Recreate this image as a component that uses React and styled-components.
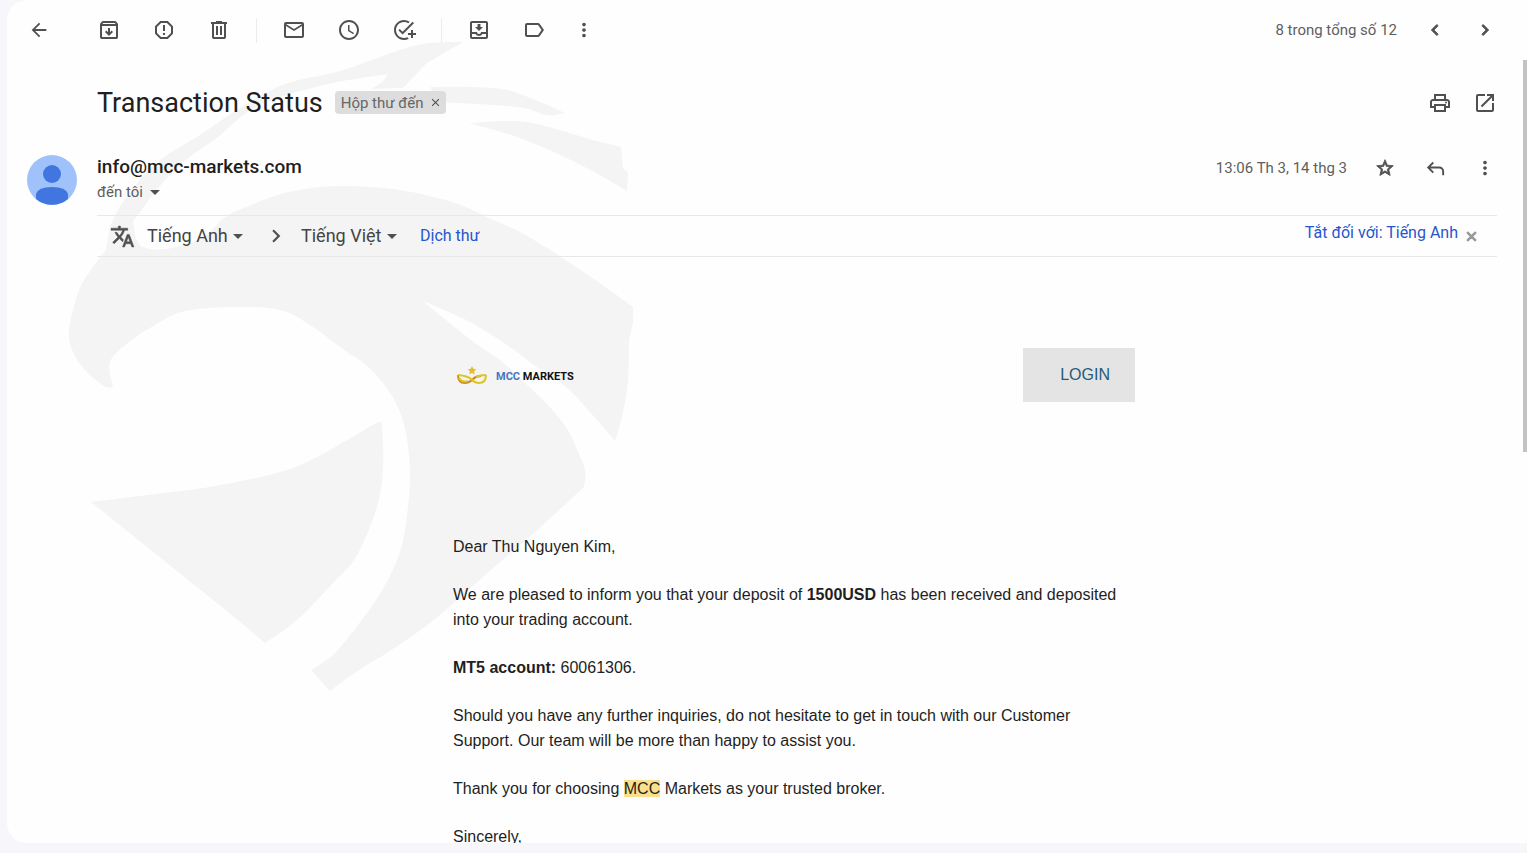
import React from "react";
import styled, { createGlobalStyle } from "styled-components";
import {
  MdReportGmailerrorred,
  MdMailOutline,
  MdAccessTime,
  MdAddTask,
  MdOutlineMoveToInbox,
  MdLabelOutline,
  MdMoreVert,
  MdChevronLeft,
  MdChevronRight,
  MdOutlinePrint,
  MdOpenInNew,
  MdStarOutline,
  MdTranslate,
  MdArrowDropDown,
  MdArrowBack,
  MdClose,
} from "react-icons/md";

const GlobalStyle = createGlobalStyle`
  * { box-sizing: border-box; }
  body {
    margin: 0;
    background: #f6f6fb;
    font-family: Roboto, "Noto Sans", sans-serif;
    color: #1f1f1f;
  }
  button, select { font: inherit; color: inherit; }
`;

const Page = styled.div`
  display: flex;
  height: 100vh;
  padding: 0 0 10px 7px;
`;

const Card = styled.main`
  position: relative;
  isolation: isolate;
  flex: 1;
  min-width: 0;
  display: flex;
  flex-direction: column;
  background: #fefefe;
  border-radius: 20px 0 0 20px;
  overflow: hidden;
`;

const Watermark = styled.svg`
  position: absolute;
  z-index: -1;
  left: 53px;
  top: 30px;
  width: 580px;
  height: 670px;
  fill: #f4f4f4;
`;

const Toolbar = styled.header`
  display: flex;
  align-items: center;
  justify-content: space-between;
  flex: none;
  height: 60px;
  padding: 0 22px 0 12px;
`;

const ToolGroup = styled.div`
  display: flex;
  align-items: center;
  gap: ${(p) => p.$gap || 15}px;
`;

const IconButton = styled.button`
  display: flex;
  align-items: center;
  justify-content: center;
  width: ${(p) => p.$width || 40}px;
  height: 40px;
  margin: 0;
  padding: 0;
  border: 0;
  background: none;
  color: #505050;
  font-size: ${(p) => p.$size || 24}px;
  cursor: pointer;

  path:not([fill="none"]) {
    stroke: ${(p) => (p.$bold ? "currentColor" : "none")};
    stroke-width: 1px;
  }
`;

const BackSlot = styled.div`
  margin-right: 15px;
`;

const Divider = styled.span`
  width: 1px;
  height: 25px;
  margin: 0 2px;
  background: #ececec;
`;

const Meta = styled.span`
  font-size: 15px;
  line-height: 20px;
  color: #5e5e5e;
  margin-right: 8px;
`;

const Scroller = styled.div`
  flex: 1;
  min-height: 0;
  overflow: hidden;
`;

const ScrollTrack = styled.div`
  position: absolute;
  top: 60px;
  right: 0;
  bottom: 0;
  width: 4px;
`;

const ScrollThumb = styled.div`
  height: 50%;
  background: #c3c3c3;
`;

const SubjectRow = styled.div`
  display: flex;
  align-items: center;
  height: 85px;
  padding: 0 22px 0 90px;
`;

const Subject = styled.h1`
  margin: 0;
  font-size: 27px;
  line-height: 36px;
  font-weight: 400;
`;

const Chip = styled.span`
  display: flex;
  align-items: center;
  gap: 6px;
  height: 23px;
  margin: 0 auto 0 12px;
  padding: 0 4px 0 6px;
  border-radius: 4px;
  background: #dddddd;
  color: #666;
  font-size: 15px;
  line-height: 20px;
`;

const PlainButton = styled.button`
  display: flex;
  align-items: center;
  margin: 0;
  padding: 0;
  border: 0;
  background: none;
  color: ${(p) => p.$color || "#505050"};
  font-size: ${(p) => p.$size || 13}px;
  cursor: pointer;

  path:not([fill="none"]) {
    stroke: ${(p) => (p.$bold ? "currentColor" : "none")};
    stroke-width: 2px;
  }
`;

const SenderRow = styled.div`
  display: flex;
  align-items: flex-start;
  height: 70px;
  padding: 3px 22px 0 20px;
`;

const Avatar = styled.svg`
  flex: none;
  width: 50px;
  height: 50px;
  margin: 7px 20px 0 0;
`;

const SenderInfo = styled.div`
  flex: 1;
  padding-top: 7px;
`;

const SenderName = styled.div`
  font-size: 19px;
  line-height: 24px;
  font-weight: 500;
`;

const Recipient = styled.div`
  display: flex;
  align-items: center;
  height: 25px;
  color: #5e5e5e;
  font-size: 15px;
`;

const TranslateBar = styled.div`
  display: flex;
  align-items: center;
  height: 42px;
  margin: 0 30px 0 90px;
  padding: 0 18px 0 13px;
  border-top: 1px solid #e8e8e8;
  border-bottom: 1px solid #e8e8e8;
  color: #505050;
`;

const LanguagePicker = styled.label`
  position: relative;
  display: flex;
  align-items: center;

  svg {
    position: absolute;
    right: 0;
    font-size: 24px;
    pointer-events: none;
  }
`;

const Direction = styled.span`
  display: flex;
  margin: 0 12px 0 13px;
  font-size: 26px;
`;

const TranslateMark = styled.span`
  display: flex;
  margin-right: 12px;
  font-size: 25px;

  path:not([fill="none"]) {
    stroke: currentColor;
    stroke-width: 0.5px;
  }
`;

const Select = styled.select`
  appearance: none;
  margin: 0;
  padding: 0 22px 0 0;
  border: 0;
  background: none;
  color: #444;
  font-size: 18px;
  line-height: 24px;
`;

const Link = styled.a`
  color: #2456cf;
  font-size: 16px;
  line-height: 24px;
  text-decoration: none;
  margin-left: ${(p) => (p.$push ? "auto" : "16px")};
  margin-right: ${(p) => (p.$push ? "6px" : "0")};
  padding-bottom: ${(p) => (p.$push ? "6px" : "0")};
`;

const MailBody = styled.article`
  padding: 91px 36px 0 90px;
  font-family: "Liberation Sans", Arial, sans-serif;
  font-size: 16px;
  line-height: 25px;
`;

const MailColumn = styled.div`
  max-width: 682px;
  margin: 0 auto;
`;

const MailHeader = styled.div`
  display: flex;
  align-items: center;
  justify-content: space-between;
  margin-bottom: 132px;
`;

const Brand = styled.div`
  display: flex;
  align-items: center;
  gap: 8px;
  padding: 2px 0 0 3px;
  font-family: Roboto, sans-serif;
  font-size: 11px;
  font-weight: 700;
  color: #111;

  em {
    font-style: normal;
    color: #4874c4;
  }
`;

const LoginLink = styled.a`
  padding: 0 25px 0 37px;
  line-height: 54px;
  background: #e4e4e4;
  color: #245a78;
  text-decoration: none;
`;

const Paragraph = styled.p`
  margin: 0 0 23px;
`;

const Highlight = styled.mark`
  background: #fbe08c;
  color: inherit;
`;

const Glyph = ({ d }) => (
  <svg width="1em" height="1em" viewBox="0 0 24 24" fill="currentColor" aria-hidden="true">
    <path d={d} />
  </svg>
);

const ARCHIVE =
  "m12 18l4-4l-1.4-1.4l-1.6 1.6V10h-2v4.2l-1.6-1.6L8 14zM5 8v11h14V8zm0 13q-.825 0-1.412-.587T3 19V6.525q0-.35.113-.675t.337-.6L4.7 3.725q.275-.35.687-.538T6.25 3h11.5q.45 0 .863.188t.687.537l1.25 1.525q.225.275.338.6t.112.675V19q0 .825-.587 1.413T19 21zm.4-15h13.2l-.85-1H6.25z";
const TRASH =
  "M7 21q-.825 0-1.412-.587T5 19V6H4V4h5V3h6v1h5v2h-1v13q0 .825-.587 1.413T17 21zM17 6H7v13h10zM9 17h2V8H9zm4 0h2V8h-2z";
const REPLY =
  "M19 19v-4q0-1.25-.875-2.125T16 12H6.8l3.6 3.6L9 17l-6-6l6-6l1.4 1.4L6.8 10H16q2.075 0 3.538 1.463T21 15v4z";

// Each run is a flat list of x, y pairs drawn as one soft curve; runs meet in sharp corners.
const outline = (runs) => {
  let d = "";
  runs.forEach((flat, index) => {
    const pts = [];
    for (let i = 0; i < flat.length; i += 2) pts.push([flat[i], flat[i + 1]]);
    d += `${index ? "L" : "M"}${pts[0].join(" ")}`;
    for (let i = 0; i < pts.length - 1; i += 1) {
      const a = pts[i - 1] || pts[i];
      const b = pts[i];
      const c = pts[i + 1];
      const e = pts[i + 2] || c;
      d += `C${b[0] + (c[0] - a[0]) / 6} ${b[1] + (c[1] - a[1]) / 6} ${c[0] - (e[0] - b[0]) / 6} ${c[1] - (e[1] - b[1]) / 6} ${c[0]} ${c[1]}`;
    }
  });
  return `${d}Z`;
};

const HEAD = outline([
  [463, 42, 430, 43, 400, 50, 340, 71, 285, 84, 240, 108, 200, 135, 160, 160, 130, 192, 112, 222, 106, 250],
  [106, 250, 93, 267, 79, 290, 69, 330, 73, 352, 85, 370, 104, 386, 113, 387],
  [113, 387, 110, 362, 129, 342, 155, 325, 185, 311, 235, 307, 280, 310, 310, 325, 344, 350, 365, 364, 382, 382, 396, 403, 406, 433, 410, 475, 407, 515, 400, 552, 384, 587, 364, 617, 335, 653, 311, 670],
  [311, 670, 330, 691],
  [330, 691, 356, 672, 396, 647, 440, 615, 500, 562, 534, 533, 584, 487],
  [584, 487, 585, 470, 576, 447, 566, 427, 546, 403, 525, 383, 500, 360, 471, 340, 423, 301],
  [423, 301, 470, 322, 510, 347, 534, 365, 566, 387, 590, 412, 615, 441],
  [615, 441, 622, 417, 628, 380, 629, 340],
  [633, 323, 633, 307],
  [633, 307, 601, 284, 558, 255, 520, 232, 493, 220, 455, 203, 400, 190, 340, 186, 289, 192, 246, 207, 224, 218, 202, 238, 165, 249, 140, 245, 133, 222],
  [133, 222, 159, 187, 186, 160, 218, 137, 246, 113, 277, 98, 333, 83, 388, 74],
  [388, 74, 382, 82, 371, 89],
  [403, 88, 427, 63],
]);

const BackgroundMark = () => (
  <Watermark viewBox="60 30 580 670" aria-hidden="true">
    <path d={HEAD} />
    <path d={outline([[430, 87, 470, 87, 507, 90, 540, 102, 565, 113], [565, 113, 547, 115, 517, 107, 440, 102]])} />
    <path
      d={outline([
        [469, 123, 526, 122, 593, 140, 621, 147],
        [623, 168, 628, 173],
        [627, 191, 594, 172, 554, 152, 514, 136, 469, 123],
      ])}
    />
    <path
      d={outline([
        [91, 502, 163, 493, 210, 487, 277, 473, 317, 457, 376, 423],
        [382, 422, 383, 470, 376, 510, 356, 557, 333, 583, 297, 620, 265, 643],
        [265, 643, 238, 620],
      ])}
    />
  </Watermark>
);

const BrandMark = () => (
  <svg width="32" height="22" viewBox="0 0 32 22" fill="none" aria-hidden="true">
    <path d="M16 1l1.300 2.800 3 .5-2.200 2 .6 3.200-2.700-1.500-2.700 1.500.6-3.200-2.200-2 3-.5z" fill="#e3bd2c" />
    <path d="M2 10Q2 18 9 18Q13 18 17 14Q20 11 25 11" stroke="#c98a26" strokeWidth="2" />
    <path d="M30 10Q30 18 23 18Q19 18 15 14Q12 11 2 10" stroke="#dfc51f" strokeWidth="2" />
    <path d="M20 12Q24 10 30 10M3 13Q6 18 12 16" stroke="#dfc51f" strokeWidth="2" />
  </svg>
);

export default function App() {
  return (
    <>
      <GlobalStyle />
      <Page>
        <Card>
          <BackgroundMark />
          <Toolbar>
            <ToolGroup>
              <BackSlot>
                <IconButton aria-label="Quay lại" $size={22}><MdArrowBack /></IconButton>
              </BackSlot>
              <IconButton aria-label="Lưu trữ"><Glyph d={ARCHIVE} /></IconButton>
              <IconButton aria-label="Báo cáo spam"><MdReportGmailerrorred /></IconButton>
              <IconButton aria-label="Xóa"><Glyph d={TRASH} /></IconButton>
              <Divider />
              <IconButton aria-label="Đánh dấu chưa đọc"><MdMailOutline /></IconButton>
              <IconButton aria-label="Tạm ẩn"><MdAccessTime /></IconButton>
              <IconButton aria-label="Thêm vào việc cần làm"><MdAddTask /></IconButton>
              <Divider />
              <IconButton aria-label="Di chuyển"><MdOutlineMoveToInbox /></IconButton>
              <IconButton aria-label="Nhãn"><MdLabelOutline /></IconButton>
              <IconButton aria-label="Khác" $width={30} $size={22}><MdMoreVert /></IconButton>
            </ToolGroup>
            <ToolGroup $gap={10}>
              <Meta>8 trong tổng số 12</Meta>
              <IconButton aria-label="Mới hơn" $bold $size={22}><MdChevronLeft /></IconButton>
              <IconButton aria-label="Cũ hơn" $bold $size={22}><MdChevronRight /></IconButton>
            </ToolGroup>
          </Toolbar>

          <Scroller>
            <SubjectRow>
              <Subject>Transaction Status</Subject>
              <Chip>
                Hộp thư đến
                <PlainButton aria-label="Xóa nhãn"><MdClose /></PlainButton>
              </Chip>
              <ToolGroup $gap={5}>
                <IconButton aria-label="In"><MdOutlinePrint /></IconButton>
                <IconButton aria-label="Mở trong cửa sổ mới"><MdOpenInNew /></IconButton>
              </ToolGroup>
            </SubjectRow>

            <SenderRow>
              <Avatar viewBox="0 0 50 50" aria-hidden="true">
                <circle cx="25" cy="25" r="25" fill="#a0c2fb" />
                <circle cx="25" cy="19" r="9" fill="#4175df" />
                <path d="M9 44 V39 Q11 32 25 32 Q39 32 41 39 V44 A25 25 0 0 1 9 44Z" fill="#4175df" />
              </Avatar>
              <SenderInfo>
                <SenderName>info@mcc-markets.com</SenderName>
                <Recipient>
                  đến tôi
                  <PlainButton aria-label="Hiện chi tiết" $size={24}><MdArrowDropDown /></PlainButton>
                </Recipient>
              </SenderInfo>
              <ToolGroup $gap={10}>
                <Meta>13:06 Th 3, 14 thg 3</Meta>
                <IconButton aria-label="Gắn dấu sao" $bold $size={20}><MdStarOutline /></IconButton>
                <IconButton aria-label="Trả lời" $size={23}><Glyph d={REPLY} /></IconButton>
                <IconButton aria-label="Tùy chọn khác" $size={22}><MdMoreVert /></IconButton>
              </ToolGroup>
            </SenderRow>

            <TranslateBar>
              <TranslateMark><MdTranslate /></TranslateMark>
              <LanguagePicker>
                <Select aria-label="Ngôn ngữ nguồn"><option>Tiếng Anh</option></Select>
                <MdArrowDropDown />
              </LanguagePicker>
              <Direction><MdChevronRight /></Direction>
              <LanguagePicker>
                <Select aria-label="Ngôn ngữ đích"><option>Tiếng Việt</option></Select>
                <MdArrowDropDown />
              </LanguagePicker>
              <Link href="#translate">Dịch thư</Link>
              <Link href="#off" $push>Tắt đối với: Tiếng Anh</Link>
              <PlainButton aria-label="Đóng" $color="#999" $size={15} $bold><MdClose /></PlainButton>
            </TranslateBar>

            <MailBody>
              <MailColumn>
                <MailHeader>
                  <Brand>
                    <BrandMark />
                    <span><em>MCC</em> MARKETS</span>
                  </Brand>
                  <LoginLink href="#login">LOGIN</LoginLink>
                </MailHeader>
                <Paragraph>Dear Thu Nguyen Kim,</Paragraph>
                <Paragraph>
                  We are pleased to inform you that your deposit of <b>1500USD</b> has been
                  received and deposited into your trading account.
                </Paragraph>
                <Paragraph><b>MT5 account:</b> 60061306.</Paragraph>
                <Paragraph>
                  Should you have any further inquiries, do not hesitate to get in touch with our
                  Customer Support. Our team will be more than happy to assist you.
                </Paragraph>
                <Paragraph>
                  Thank you for choosing <Highlight>MCC</Highlight> Markets as your trusted broker.
                </Paragraph>
                <Paragraph>Sincerely,</Paragraph>
              </MailColumn>
            </MailBody>
          </Scroller>
          <ScrollTrack><ScrollThumb /></ScrollTrack>
        </Card>
      </Page>
    </>
  );
}
